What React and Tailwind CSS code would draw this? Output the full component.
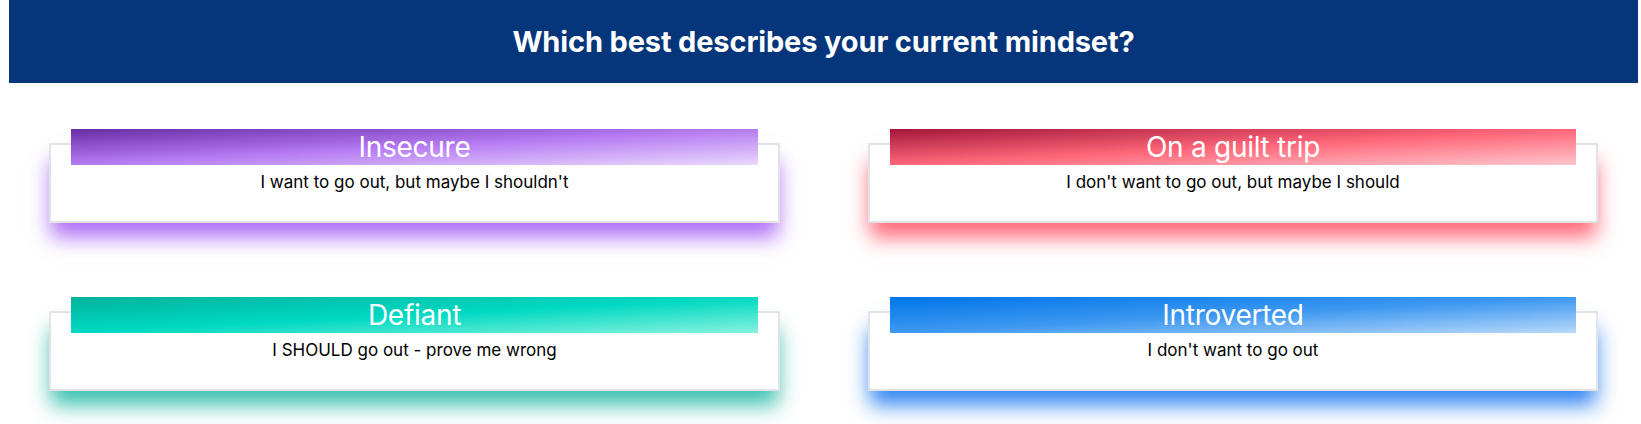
export default function App() {
  const cards = [
    {
      title: "Insecure",
      text: "I want to go out, but maybe I shouldn't",
      strip: "bg-[linear-gradient(to_bottom_right,#6a2ca6,#b67cf3,#ead8fc)]",
      shadow: "shadow-[0_16px_20px_-2px_rgba(165,92,245,0.9)]",
    },
    {
      title: "On a guilt trip",
      text: "I don't want to go out, but maybe I should",
      strip: "bg-[linear-gradient(to_bottom_right,#a3173a,#ff6679,#ffc6cd)]",
      shadow: "shadow-[0_16px_20px_-2px_rgba(255,85,104,0.9)]",
    },
    {
      title: "Defiant",
      text: "I SHOULD go out - prove me wrong",
      strip: "bg-[linear-gradient(to_bottom_right,#00b39d,#00d9c2,#86f2df)]",
      shadow: "shadow-[0_16px_20px_-2px_rgba(35,185,165,0.9)]",
    },
    {
      title: "Introverted",
      text: "I don't want to go out",
      strip: "bg-[linear-gradient(to_bottom_right,#0075e8,#3d98f1,#b8d9fa)]",
      shadow: "shadow-[0_16px_20px_-2px_rgba(25,120,240,0.9)]",
    },
  ];

  return (
    <div className="min-h-[424px] bg-white font-['Inter','Liberation_Sans',sans-serif]">
      <div className="ml-[9px] mr-[3px] h-[83px] bg-[#05357a] flex items-center justify-center">
        <h1 className="text-white font-bold text-[29px] tracking-[-0.005em] leading-none">
          Which best describes your current mindset?
        </h1>
      </div>
      <div className="grid grid-cols-[731px_730px] gap-x-[88px] gap-y-[88px] pl-[49px] pt-[60px]">
        {cards.map((c) => (
          <div
            key={c.title}
            className={`bg-white border-2 border-[#e2e3e8] h-[80px] ${c.shadow}`}
          >
            <div
              className={`-mt-[16px] mx-[20px] h-[36px] flex items-center justify-center ${c.strip}`}
            >
              <span className="text-white text-[28px] leading-none tracking-[-0.01em]">
                {c.title}
              </span>
            </div>
            <p className="text-center text-black text-[17px] leading-[24px] mt-[5px]">
              {c.text}
            </p>
          </div>
        ))}
      </div>
    </div>
  );
}
